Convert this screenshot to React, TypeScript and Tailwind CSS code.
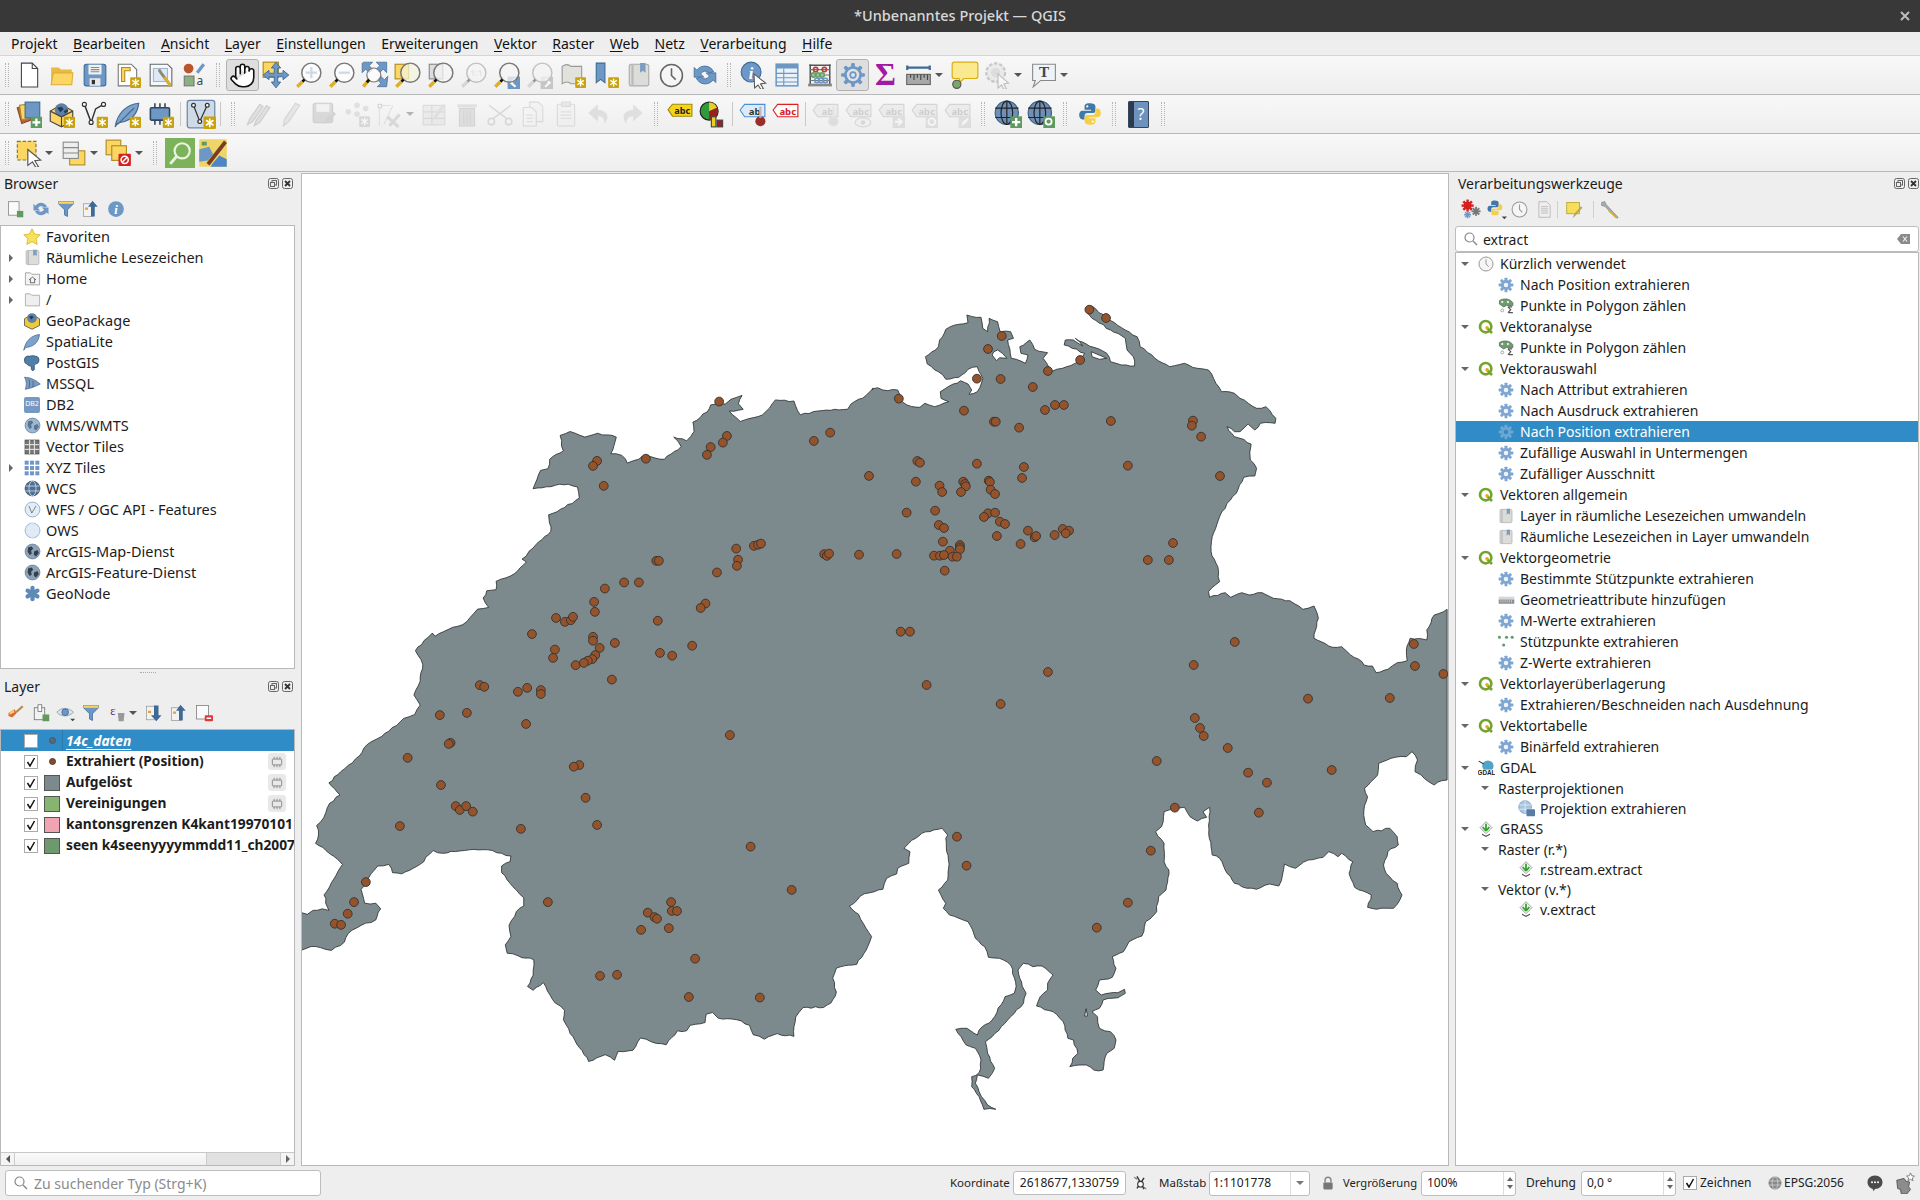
import React from "react";
import { Hand } from "lucide-react";

const BLUE = "#6d97c4";
const DBLUE = "#3f6a96";
const YEL = "#fcd662";
const GOLD = "#c9a20c";

type P = { s?: number; children?: React.ReactNode };
const Sv = ({ s = 24, children }: P) => (
  <svg width={s} height={s} viewBox="0 0 24 24" className="block shrink-0">
    {children}
  </svg>
);

// gold corner badge used on the "new ..." icons
const Badge = ({ c = GOLD }: { c?: string }) => (
  <g>
    <rect x="14" y="14" width="10" height="10" rx="1" fill={c} />
    <path d="M19 15.5v7M16 17l6 4M22 17l-6 4" stroke="#fff" strokeWidth="1.3" />
  </g>
);

const Gear = ({ s = 16, c = "#7ea6d1", hub = "#eef4fa" }: { s?: number; c?: string; hub?: string }) => (
  <Sv s={s}>
    {[0, 45, 90, 135].map((a) => (
      <rect key={a} x="9.8" y="1" width="4.4" height="22" rx="1" fill={c} transform={`rotate(${a} 12 12)`} />
    ))}
    <circle cx="12" cy="12" r="7.6" fill={c} />
    <circle cx="12" cy="12" r="3.4" fill={hub} />
  </Sv>
);

const Mag = ({ fill = "#f4f4f4", children, s = 27 }: { fill?: string; children?: React.ReactNode; s?: number }) => (
  <Sv s={s}>
    {children}
    <circle cx="14.5" cy="9.5" r="8.5" fill={fill} fillOpacity="0.75" stroke="#777" strokeWidth="1.3" />
    <path d="M8.5 15.5L6.500 17.500" stroke="#111" strokeWidth="2.4" />
    <path d="M6.500 17.500l-4.500 4.500" stroke="#e0b020" strokeWidth="3" />
  </Sv>
);

const Globe = ({ s = 18, c = "#7c9cc0", d = "#4e6e92" }: { s?: number; c?: string; d?: string }) => (
  <Sv s={s}>
    <circle cx="12" cy="12" r="10.5" fill={c} stroke={d} />
    <ellipse cx="12" cy="12" rx="5" ry="10.5" fill="none" stroke="#e6eef6" strokeWidth="1" />
    <path d="M2 8.5h20M2 15.5h20" stroke="#e6eef6" strokeWidth="1" />
  </Sv>
);

const Earth = ({ s = 18, dark = false }: { s?: number; dark?: boolean }) => (
  <Sv s={s}>
    <circle cx="12" cy="12" r="10.5" fill={dark ? "#8fa3b8" : "#9db7d2"} stroke="#5d7a98" />
    <path d="M6 6l5-1 2 3-3 3 1 4-3 2-3-5zM14 12l5-2 2 4-4 5-3-2z" fill={dark ? "#33404c" : "#5b7590"} />
  </Sv>
);

const QLogo = ({ s = 16 }: { s?: number }) => (
  <Sv s={s}>
    <circle cx="11.5" cy="11.5" r="8.5" fill="#fff" stroke="#74a32f" strokeWidth="4" />
    <path d="M13 13l8 8" stroke="#74a32f" strokeWidth="4" />
    <circle cx="13.5" cy="13" r="2.6" fill="#e8a91c" />
  </Sv>
);

const Grass = ({ s = 16 }: { s?: number }) => (
  <Sv s={s}>
    <path d="M12 1l9 9-9 9-9-9z" fill="#eef5e8" stroke="#778" strokeWidth="1" />
    <path d="M12 4v11M12 15l-5-6M12 15l5-6" stroke="#2fa32f" strokeWidth="2.6" />
    <path d="M6 20l6 3 6-3" fill="none" stroke="#555" strokeWidth="1.6" />
  </Sv>
);

const Bookmark = ({ s = 16 }: { s?: number }) => (
  <Sv s={s}>
    <rect x="3" y="2" width="18" height="20" rx="2" fill="#dcdcd8" stroke="#aaa" />
    <path d="M6 2v20" stroke="#bbb" strokeWidth="2" />
    <path d="M13 1h5v9l-2.5-2-2.5 2z" fill="#7c9cc0" />
  </Sv>
);

const Clock = ({ s = 18, c = "#888" }: { s?: number; c?: string }) => (
  <Sv s={s}>
    <circle cx="12" cy="12" r="10.5" fill="#f6f6f6" stroke={c} strokeWidth="1.5" />
    <path d="M12 5v7l4 4" fill="none" stroke={c} strokeWidth="1.5" />
  </Sv>
);

const PyLogo = ({ s = 24 }: { s?: number }) => (
  <Sv s={s}>
    <path d="M12 2c-5 0-5 2-5 3v3h6v1H5c-2 0-3 2-3 4s1 4 3 4h2v-3c0-2 1-3 3-3h5c1.5 0 2-1 2-2V5c0-2-2-3-5-3z" fill="#3f78aa" />
    <path d="M12 22c5 0 5-2 5-3v-3h-6v-1h8c2 0 3-2 3-4s-1-4-3-4h-2v3c0 2-1 3-3 3H9c-1.5 0-2 1-2 2v4c0 2 2 3 5 3z" fill="#f6cf4a" />
    <circle cx="9.5" cy="5" r="1" fill="#fff" />
    <circle cx="14.5" cy="19" r="1" fill="#fff" />
  </Sv>
);

const LabelTag = ({ bg = "#fff", st = "#999", tx = "#888", label = "abc" }) => (
  <>
    <path d="M1 8l4-5h18v11H5z" fill={bg} stroke={st} />
    <text x="14" y="12" textAnchor="middle" fontSize="8.5" fontWeight="700" fontFamily="Noto Sans" fill={tx}>
      {label}
    </text>
  </>
);

const Chip = ({ s = 16, c = "#888", f = "none" }: { s?: number; c?: string; f?: string }) => (
  <Sv s={s}>
    <rect x="4" y="7" width="16" height="10" rx="1" fill={f} stroke={c} strokeWidth="1.6" />
    <path d="M7 3v4M12 3v4M17 3v4M7 17v4M12 17v4M17 17v4" stroke={c} strokeWidth="1.6" />
  </Sv>
);

// toolbar icons
const I: Record<string, React.ReactNode> = {
  hand: <Hand size={27} fill="#fff" stroke="#111" strokeWidth={1.4} />,
  new: (
    <Sv s={26}>
      <path d="M5 1h10l5 5v17H5z" fill="#fff" stroke="#444" />
      <path d="M15 1v5h5" fill="none" stroke="#444" />
    </Sv>
  ),
  open: (
    <Sv s={26}>
      <path d="M2 21V5h7l2 2h10v14z" fill="#eab93f" />
      <path d="M2 21l2-11h18l-1 11z" fill={YEL} stroke="#dcae39" />
    </Sv>
  ),
  save: (
    <Sv s={26}>
      <rect x="2" y="2" width="20" height="20" rx="2" fill={BLUE} stroke={DBLUE} />
      <rect x="6" y="2.5" width="12" height="9" fill="#f2f2f2" />
      <path d="M8 5h8M8 7h8M8 9h8" stroke="#888" />
      <rect x="7" y="15" width="10" height="7" fill="#e8e8e8" />
      <rect x="9" y="16.5" width="3" height="4" fill="#333" />
    </Sv>
  ),
  layoutNew: (
    <Sv s={26}>
      <path d="M3 2h12l5 5v15H3z" fill="#fff" stroke="#777" />
      <path d="M6 5h8v3H9v10H6z" fill={YEL} stroke="#b08a20" />
      <Badge />
    </Sv>
  ),
  layoutMgr: (
    <Sv s={26}>
      <path d="M2 2h16l4 4v16H2z" fill="#f6f8fc" stroke="#666" />
      <rect x="5" y="6" width="13" height="12" fill="#dfe8f6" stroke="#9db7d2" />
      <path d="M10 7l2 3 9 12" stroke="#8a8a70" strokeWidth="2.6" />
      <path d="M15 14l6 8" stroke="#e0b020" strokeWidth="2.6" />
    </Sv>
  ),
  style: (
    <Sv s={26}>
      <circle cx="7" cy="6" r="4.5" fill="#b9562e" />
      <path d="M15 10l6-8" stroke={BLUE} strokeWidth="3" />
      <rect x="3" y="13" width="9" height="9" fill="#8cb080" stroke="#777" />
      <text x="17.5" y="21" textAnchor="middle" fontSize="11" fontFamily="Noto Sans" fill="#444">
        a
      </text>
    </Sv>
  ),
  pan: (
    <Sv s={28}>
      <rect x="1" y="1" width="13" height="13" fill={YEL} stroke="#b08a20" />
      <path d="M12 1l4 5h-2.5v4.500H18V8l5 4-5 4v-2.500h-4.500V18H16l-4 5-4-5h2.500v-4.500H6V16l-5-4 5-4v2.500h4.500V6H8z" fill={BLUE} stroke={DBLUE} strokeWidth=".8" />
    </Sv>
  ),
  zoomIn: (
    <Mag fill="#fff">
      <path d="M14.500 4.500v10M9.500 9.500h10" stroke={DBLUE} strokeWidth="2" />
    </Mag>
  ),
  zoomOut: (
    <Mag fill="#fff">
      <path d="M9.500 9.500h10" stroke={DBLUE} strokeWidth="2" />
    </Mag>
  ),
  zoomFull: (
    <Sv s={28}>
      <path d="M2 1h8L7 4l3 3-3 3-3-3-3 3V2zM22 1v9l-3-3-3 3-3-3 3-3-3-3zM22 22h-8l3-3-3-3 3-3 3 3 3-3z" fill={BLUE} stroke={DBLUE} strokeWidth=".6" />
      <circle cx="11" cy="12" r="6" fill="#fff" fillOpacity=".7" stroke="#777" />
      <path d="M7 16l-5 6" stroke="#e0b020" strokeWidth="3" />
      <path d="M7 16l-2 2.4" stroke="#111" strokeWidth="2.4" />
    </Sv>
  ),
  zoomSel: (
    <Mag fill="#f4f4dc">
      <rect x="1" y="2" width="12" height="13" fill={YEL} stroke="#b08a20" />
    </Mag>
  ),
  zoomLayer: (
    <Mag>
      <rect x="2" y="2" width="12" height="13" fill="#ddd" stroke="#888" />
    </Mag>
  ),
  zoom11: (
    <div className="opacity-40 grayscale">
      <Mag>
        <text x="14.500" y="12.500" textAnchor="middle" fontSize="8" fontWeight="700" fontFamily="Noto Sans" fill="#666">
          1:1
        </text>
      </Mag>
    </div>
  ),
  zoomLast: (
    <Mag>
      <rect x="13" y="13" width="11" height="11" fill={BLUE} />
      <path d="M20 15l-4 3.500 4 3.500" fill="none" stroke="#fff" strokeWidth="2" />
    </Mag>
  ),
  zoomNext: (
    <div className="opacity-40 grayscale">
      <Mag>
        <rect x="13" y="13" width="11" height="11" fill="#888" />
        <path d="M17 15l4 3.500-4 3.500" fill="none" stroke="#fff" strokeWidth="2" />
      </Mag>
    </div>
  ),
  mapView: (
    <Sv s={26}>
      <path d="M2 4c3-2 6-2 8 0h10v16H10c-2-2-5-2-8 0z" fill="#e2e2dc" stroke="#999" />
      <Badge />
    </Sv>
  ),
  bmNew: (
    <Sv s={26}>
      <path d="M3 1h8v18l-4-3-4 3z" fill={BLUE} stroke={DBLUE} />
      <Badge />
    </Sv>
  ),
  bm: <Bookmark s={26} />,
  clock: <Clock s={25} c="#666" />,
  refresh: (
    <Sv s={26}>
      <path d="M20 9A9 9 0 0 0 4.5 7.500L2 5v9h9l-3-3a5 5 0 0 1 8-1z" fill={BLUE} stroke={DBLUE} strokeWidth=".7" />
      <path d="M4 15a9 9 0 0 0 15.500 1.500L22 19v-9h-9l3 3a5 5 0 0 1-8 1z" fill={BLUE} stroke={DBLUE} strokeWidth=".7" />
    </Sv>
  ),
  identify: (
    <Sv s={28}>
      <circle cx="9.5" cy="9.5" r="8.5" fill={BLUE} stroke={DBLUE} />
      <text x="9.5" y="15" textAnchor="middle" fontSize="14" fontWeight="700" fontStyle="italic" fontFamily="Liberation Serif" fill="#fff">
        i
      </text>
      <path d="M12 11l10 8-4.500 .6 2.500 4-2 1-2.500-4-3 2.500z" fill="#fff" stroke="#555" strokeWidth=".9" />
    </Sv>
  ),
  table: (
    <Sv s={26}>
      <rect x="2" y="2" width="20" height="20" fill="#eaf1f9" stroke={BLUE} strokeWidth="1.4" />
      <rect x="2" y="2" width="20" height="4" fill={BLUE} />
      <path d="M2 10.5h20M2 14.5h20M2 18.5h20M9 6v16" stroke={BLUE} />
    </Sv>
  ),
  abacus: (
    <Sv s={26}>
      <path d="M3 2v19M21 2v19M2 3h20" stroke="#555" strokeWidth="1.4" />
      <rect x="1" y="20" width="22" height="2.5" fill="#888" />
      <path d="M3 7h18M3 12h18M3 17h18" stroke="#777" />
      {[8, 16].map((x) => (
        <circle key={x} cx={x} cy="7" r="2" fill="none" stroke="#c23a3a" strokeWidth="1.5" />
      ))}
      {[6, 10, 14].map((x) => (
        <circle key={x} cx={x} cy="12" r="2" fill="none" stroke="#5fa55f" strokeWidth="1.5" />
      ))}
      {[9, 13, 17].map((x) => (
        <circle key={x} cx={x} cy="17" r="2" fill="none" stroke={BLUE} strokeWidth="1.5" />
      ))}
    </Sv>
  ),
  gear: (
    <Sv s={26}>
      {[0, 45, 90, 135].map((a) => (
        <rect key={a} x="10.3" y="1" width="3.4" height="22" rx="1" fill={BLUE} transform={`rotate(${a} 12 12)`} />
      ))}
      <circle cx="12" cy="12" r="7" fill="#dfe3e8" stroke={BLUE} strokeWidth="2.5" />
      <circle cx="12" cy="12" r="2.6" fill="#dfe3e8" stroke={BLUE} strokeWidth="1.5" />
    </Sv>
  ),
  sigma: <span className="font-['Liberation_Serif',serif] text-[32px] leading-[28px] font-bold text-[#a319a3]">Σ</span>,
  ruler: (
    <Sv s={27}>
      <path d="M2 3v4M22 3v4M2 5h20" stroke={DBLUE} strokeWidth="2" />
      <rect x="1.5" y="11" width="21" height="9" fill="#a8a8a8" stroke="#666" />
      <path d="M5 11v3M8 11v5M11 11v3M14 11v5M17 11v3M20 11v5" stroke="#444" />
    </Sv>
  ),
  bubble: (
    <Sv s={28}>
      <path d="M3 1h18a2 2 0 0 1 2 2v10a2 2 0 0 1-2 2H11l-3 3-1-3H3a2 2 0 0 1-2-2V3a2 2 0 0 1 2-2z" fill="#fbe98f" stroke="#d8ae12" />
      <circle cx="5" cy="20" r="3.5" fill="#7ba56a" stroke="#555" />
    </Sv>
  ),
  action: (
    <div className="opacity-40 grayscale">
      <Sv s={28}>
        <circle cx="10" cy="10" r="8" fill="#ddd" stroke="#888" strokeWidth="2" strokeDasharray="3 1.5" />
        <circle cx="10" cy="10" r="4" fill="#bbb" />
        <path d="M12 11l9 8-4 .6 2 4-2 1-2-4-3 2.5z" fill="#fff" stroke="#777" />
      </Sv>
    </div>
  ),
  textAnn: (
    <Sv s={26}>
      <path d="M1.5 2h21v15H9L2 23l2-6H1.5z" fill="#edf3f6" stroke="#888" />
      <text x="12" y="14" textAnchor="middle" fontSize="14" fontWeight="700" fontFamily="Liberation Serif" fill="#444">
        T
      </text>
    </Sv>
  ),
  addLayer: (
    <Sv s={27}>
      <path d="M2 6l9-3 3 14-8 3z" fill="#c2643a" stroke="#8a4a2a" />
      <rect x="5" y="3" width="11" height="13" fill={YEL} stroke="#b08a20" transform="rotate(-8 10 10)" />
      <rect x="9" y="1" width="13" height="14" fill={BLUE} stroke={DBLUE} />
      <rect x="14" y="14" width="10" height="10" fill="#5f9a5f" />
      <path d="M19 15.5v7M15.5 19h7" stroke="#fff" strokeWidth="2" />
    </Sv>
  ),
  gpkg: (
    <Sv s={27}>
      <path d="M2 9l10-6 10 6v9l-10 5-10-5z" fill={YEL} stroke="#444" />
      <circle cx="12" cy="8" r="6" fill="#5f7fa5" />
      <path d="M8 6l4-1 2 2-3 3zM14 9l3-2 1 2-3 2z" fill="#1f3a5a" />
      <path d="M2 9l10 5 10-5M12 14v9" fill="none" stroke="#444" />
      <Badge />
    </Sv>
  ),
  shp: (
    <Sv s={27}>
      <path d="M3 3l6 16 4-12 7-4" fill="none" stroke="#333" strokeWidth="1.3" />
      <circle cx="3" cy="3" r="1.8" fill="#fff" stroke="#333" />
      <circle cx="9" cy="19" r="1.8" fill="#fff" stroke="#333" />
      <circle cx="20" cy="3" r="1.8" fill="#fff" stroke="#333" />
      <Badge />
    </Sv>
  ),
  feather: (
    <Sv s={27}>
      <path d="M1 23c2-12 10-20 21-21-1 9-6 14-12 16-3 1-6 1-7 2z" fill="#7ba3cc" stroke="#47688f" />
      <path d="M3 21L18 6" stroke="#47688f" />
      <Badge />
    </Sv>
  ),
  tmp: (
    <Sv s={27}>
      <rect x="3" y="6" width="17" height="11" rx="1" fill={BLUE} stroke="#33475c" strokeWidth="1.4" />
      <path d="M7 2v4M11.500 2v4M16 2v4M7 17v4M11.500 17v4" stroke="#33475c" strokeWidth="1.4" />
      <Badge />
    </Sv>
  ),
  vedit: (
    <Sv s={30}>
      <rect x="1" y="1" width="22" height="22" rx="2" fill="#cfdae7" stroke="#6d88a8" />
      <path d="M6 5l5 13 6-13" fill="none" stroke="#333" />
      <circle cx="6" cy="5" r="1.5" fill="#fff" stroke="#333" />
      <circle cx="17" cy="5" r="1.5" fill="#fff" stroke="#333" />
      <circle cx="11" cy="18" r="1.5" fill="#fff" stroke="#333" />
      <Badge />
    </Sv>
  ),
  pen2: (
    <Sv s={27}>
      <path d="M3 21l2-5 9-13 3 2-9 13zM9 22l2-5 9-13 3 2-9 13z" fill="#bbb" stroke="#888" />
    </Sv>
  ),
  pen: (
    <Sv s={26}>
      <path d="M5 23l1-6L16 2l4 2-10 15z" fill="#ccc" stroke="#999" />
    </Sv>
  ),
  saveEdit: (
    <Sv s={26}>
      <rect x="2" y="2" width="18" height="18" rx="2" fill="#aaa" stroke="#888" />
      <rect x="5" y="3" width="12" height="7" fill="#eee" />
      <path d="M12 21l2-5 7-6 2 2-6 7z" fill="#999" />
    </Sv>
  ),
  nodes: (
    <Sv s={26}>
      {[[4, 10], [12, 4], [20, 7], [12, 12]].map(([x, y]) => (
        <circle key={x * y} cx={x} cy={y} r="2.6" fill="#bbb" />
      ))}
      <Badge c="#aaa" />
    </Sv>
  ),
  tools: (
    <Sv s={27}>
      <rect x="2" y="3" width="3" height="3" fill="none" stroke="#999" />
      <path d="M5 4h8M3 6v16M15 4l-8 17" stroke="#bbb" />
      <path d="M10 14l10 9M21 12L12 22" stroke="#aaa" strokeWidth="2.8" />
    </Sv>
  ),
  attrEdit: (
    <Sv s={26}>
      <rect x="2" y="4" width="20" height="18" fill="#ddd" stroke="#aaa" />
      <path d="M2 10h20M2 16h20M10 4v18" stroke="#aaa" />
      <path d="M10 19l2-5 8-11 2 2-8 11z" fill="#bbb" />
    </Sv>
  ),
  trash: (
    <Sv s={26}>
      <rect x="3" y="3" width="18" height="3" fill="#c8b8b8" />
      <path d="M5 7h14v16H5z" fill="#c8b8b8" stroke="#a89898" />
      <path d="M9 9v12M12 9v12M15 9v12" stroke="#a89898" />
    </Sv>
  ),
  cut: (
    <Sv s={26}>
      <path d="M2 4l16 12M22 4L6 16" stroke="#aaa" strokeWidth="1.5" />
      <circle cx="4" cy="19" r="3" fill="none" stroke="#aaa" strokeWidth="1.5" />
      <circle cx="20" cy="19" r="3" fill="none" stroke="#aaa" strokeWidth="1.5" />
    </Sv>
  ),
  copy: (
    <Sv s={26}>
      <path d="M9 1h8l4 4v14H9z" fill="#eee" stroke="#aaa" />
      <path d="M3 6h8l4 4v13H3z" fill="#f4f4f4" stroke="#aaa" />
      <path d="M6 13h6M6 16h6M6 19h6" stroke="#bbb" />
    </Sv>
  ),
  paste: (
    <Sv s={26}>
      <rect x="4" y="3" width="16" height="20" rx="1" fill="#eee" stroke="#aaa" />
      <rect x="8" y="1" width="8" height="4" fill="#ccc" stroke="#aaa" />
      <path d="M7 10h10M7 13h10M7 16h10" stroke="#bbb" />
    </Sv>
  ),
  undo: (
    <Sv s={26}>
      <path d="M11 3L2 11l9 8v-5c4 0 6 2 6 7 4-4 5-12-6-13z" fill="#bbb" />
    </Sv>
  ),
  redo: (
    <Sv s={26}>
      <path d="M13 3l9 8-9 8v-5c-4 0-6 2-6 7-4-4-5-12 6-13z" fill="#bbb" />
    </Sv>
  ),
  lblYellow: (
    <Sv s={26}>
      <LabelTag bg="#f6d419" st="#9c8a10" tx="#222" />
    </Sv>
  ),
  lblChart: (
    <Sv s={27}>
      <circle cx="9" cy="9" r="8" fill="#2e9a3a" stroke="#222" />
      <path d="M9 9V1a8 8 0 0 1 7 5z" fill="#e8d020" />
      <path d="M9 9l7-3a8 8 0 0 1-7 11z" fill="#9a1f1f" />
      <rect x="11" y="14" width="4" height="9" fill="#e8d020" stroke="#444" />
      <rect x="16" y="17" width="5" height="6" fill="#9a1f1f" stroke="#444" />
    </Sv>
  ),
  lblPin: (
    <Sv s={27}>
      <LabelTag bg="#dceafa" st="#4a90d9" tx="#333" label="ab" />
      <circle cx="19" cy="18" r="4.5" fill="#9a2c2c" />
      <path d="M19 5v10" stroke="#bbb" strokeWidth="2" />
    </Sv>
  ),
  lblRed: (
    <Sv s={27}>
      <LabelTag st="#e02020" tx="#d02020" />
    </Sv>
  ),
  lg1: (
    <Sv s={27}>
      <LabelTag bg="#ddd" label="ab" />
      <circle cx="19" cy="18" r="4.5" fill="#bbb" />
      <path d="M19 5v10" stroke="#ccc" strokeWidth="2" />
    </Sv>
  ),
  lg2: (
    <Sv s={27}>
      <LabelTag bg="#ddd" />
      <ellipse cx="16" cy="19" rx="7" ry="4" fill="#eee" stroke="#aaa" />
      <circle cx="16" cy="19" r="2" fill="#aaa" />
    </Sv>
  ),
  lg3: (
    <Sv s={27}>
      <LabelTag bg="#ddd" />
      <rect x="13" y="13" width="11" height="11" fill="#bbb" />
      <path d="M15 18.500h5M18 15.500l3 3-3 3" fill="none" stroke="#fff" strokeWidth="1.8" />
    </Sv>
  ),
  lg4: (
    <Sv s={27}>
      <LabelTag bg="#ddd" />
      <rect x="13" y="13" width="11" height="11" fill="#bbb" />
      <circle cx="18.5" cy="18.5" r="3" fill="none" stroke="#fff" strokeWidth="1.6" />
    </Sv>
  ),
  lg5: (
    <Sv s={27}>
      <LabelTag bg="#ddd" />
      <rect x="13" y="13" width="11" height="11" fill="#bbb" />
      <path d="M15 22l2-4 4-3 1 1-3 4z" fill="#fff" />
    </Sv>
  ),
  wms: (
    <Sv s={28}>
      <circle cx="11" cy="11" r="10" fill="#6d8fb8" stroke="#40607e" />
      <ellipse cx="11" cy="11" rx="5" ry="10" fill="none" stroke="#222" />
      <path d="M1 7h20M1 15h20M11 1v20" stroke="#222" />
      <rect x="14" y="14" width="10" height="10" fill="#5f9a5f" />
      <path d="M19 15.5v7M15.5 19h7" stroke="#fff" strokeWidth="2" />
    </Sv>
  ),
  wms2: (
    <Sv s={28}>
      <circle cx="11" cy="11" r="10" fill="#6d8fb8" stroke="#40607e" />
      <ellipse cx="11" cy="11" rx="5" ry="10" fill="none" stroke="#222" />
      <path d="M1 7h20M1 15h20M11 1v20" stroke="#222" />
      <rect x="14" y="14" width="10" height="10" fill="#5f9a5f" />
      <circle cx="18.5" cy="18.5" r="2.6" fill="none" stroke="#fff" strokeWidth="1.5" />
    </Sv>
  ),
  py: <PyLogo s={26} />,
  help: (
    <div className="flex h-[27px] w-[21px] overflow-hidden rounded-[1px] border border-[#33475c]">
      <div className="w-[5px] bg-[#2f3b4a]" />
      <div className="flex-1 bg-[#6d92bd] text-center text-[16px] leading-[24px] text-white">?</div>
    </div>
  ),
  select: (
    <Sv s={28}>
      <rect x="2" y="2" width="16" height="16" fill={YEL} stroke="#8a7a20" strokeDasharray="3 1.5" />
      <path d="M11 9l11 9-5 .6 3 5-2 1-3-5-4 3z" fill="#fff" stroke="#555" />
    </Sv>
  ),
  selAttr: (
    <Sv s={26}>
      <rect x="8" y="10" width="14" height="13" fill={YEL} stroke="#b08a20" />
      <rect x="2" y="2" width="14" height="15" fill="#eee" stroke="#888" />
      <path d="M2 7h14M2 12h14" stroke="#888" />
    </Sv>
  ),
  deselect: (
    <Sv s={27}>
      <rect x="1" y="1" width="13" height="13" fill={YEL} stroke="#b08a20" />
      <rect x="6" y="6" width="13" height="13" fill={YEL} stroke="#b08a20" />
      <rect x="12" y="13" width="11" height="11" rx="1" fill="#d81f1f" />
      <circle cx="17.5" cy="18.5" r="3.2" fill="none" stroke="#fff" strokeWidth="1.4" />
      <path d="M15.5 20.5l4-4" stroke="#fff" strokeWidth="1.4" />
    </Sv>
  ),
  locate: (
    <div className="flex h-[30px] w-[30px] items-center justify-center bg-[#7cb35a]">
      <Sv s={26}>
        <circle cx="14" cy="10" r="7" fill="none" stroke="#e9f4df" strokeWidth="2" />
        <path d="M9 15l-6 7" stroke="#e9f4df" strokeWidth="2.6" />
      </Sv>
    </div>
  ),
  mapPaint: (
    <Sv s={30}>
      <rect x="1" y="1" width="22" height="22" fill="#efd46a" />
      <path d="M1 9l8-2 3 6-4 5-7 1z" fill="#6d97c4" />
      <path d="M12 20l5-6 6 3v6H10z" fill="#4d86c8" />
      <path d="M3 3h4v3H3z" fill="#5f9a5f" />
      <path d="M8 21L22 3" stroke="#7c3d1e" strokeWidth="3" />
    </Sv>
  ),
};

const Grip = ({ w }: { w: number }) => (
  <div className="flex shrink-0 justify-center" style={{ width: w }}>
    <div className="h-[24px] w-[4px] border-x border-dotted border-[#b4b4b4]" />
  </div>
);
const Sep = () => (
  <div className="flex w-[7px] shrink-0 justify-center">
    <div className="h-[24px] w-px bg-[#c8c8c8]" />
  </div>
);
const Caret = ({ c = "border-t-[#555]" }: { c?: string }) => (
  <div className={`h-0 w-0 border-x-[4px] border-t-[4px] border-x-transparent ${c}`} />
);

const Btn = ({ i, off, on, w = 33, caret }: { i: string; off?: boolean; on?: boolean; w?: number; caret?: boolean }) => (
  <div className="flex h-[33px] shrink-0 items-center" style={{ width: w }}>
    <div
      className={`flex h-[32px] w-[33px] shrink-0 items-center justify-center rounded-[3px] ${
        on ? "border border-[#b2b2b2] bg-[#dedede]" : ""
      }`}
    >
      <div className={off ? "opacity-35 grayscale" : ""}>{I[i]}</div>
    </div>
    {caret && (
      <div className={off ? "opacity-40" : ""}>
        <Caret />
      </div>
    )}
  </div>
);

const Toolbar = ({ children, last }: { children: React.ReactNode; last?: boolean }) => (
  <div
    className={`flex shrink-0 items-center border-b border-[#b9b9b9] bg-gradient-to-b from-[#f8f8f8] to-[#eeeeee] pl-px ${
      last ? "h-[38px]" : "h-[39px]"
    }`}
  >
    {children}
  </div>
);

const MENU: [string, string, string][] = [
  ["Pro", "j", "ekt"],
  ["", "B", "earbeiten"],
  ["", "A", "nsicht"],
  ["", "L", "ayer"],
  ["", "E", "instellungen"],
  ["Er", "w", "eiterungen"],
  ["", "V", "ektor"],
  ["", "R", "aster"],
  ["", "W", "eb"],
  ["", "N", "etz"],
  ["", "V", "erarbeitung"],
  ["", "H", "ilfe"],
];

const DockBtns = () => (
  <div className="flex gap-[3px]">
    <svg width="11" height="11" viewBox="0 0 11 11" className="block">
      <rect x=".5" y=".5" width="10" height="10" rx="2" fill="none" stroke="#666" />
      <rect x="4" y="2.5" width="4.5" height="4.5" fill="none" stroke="#666" />
      <rect x="2.5" y="4.5" width="4" height="4" fill="#eee" stroke="#666" />
    </svg>
    <svg width="11" height="11" viewBox="0 0 11 11" className="block">
      <rect x=".5" y=".5" width="10" height="10" rx="2" fill="none" stroke="#666" />
      <path d="M3 3l5 5M8 3l-5 5" stroke="#333" strokeWidth="1.8" />
    </svg>
  </div>
);

const DockTitle = ({ t }: { t: string }) => (
  <div className="flex h-[26px] shrink-0 items-center justify-between pr-[2px] pb-[3px] text-[14px] text-[#1c1c1c]">
    <span className="pl-[4px]">{t}</span>
    <DockBtns />
  </div>
);

const Tri = () => (
  <div className="h-0 w-0 border-y-[4px] border-l-[4px] border-y-transparent border-l-[#666]" />
);

const BROWSER: [string, React.ReactNode, boolean?][] = [
  [
    "Favoriten",
    <Sv s={18}>
      <path d="M12 1l3.400 7 7.600 1-5.500 5.300L19 22l-7-3.700L5 22l1.500-7.700L1 9l7.600-1z" fill="#f7e05a" stroke="#d2b21e" />
    </Sv>,
  ],
  ["Räumliche Lesezeichen", <Bookmark s={17} />, true],
  [
    "Home",
    <Sv s={17}>
      <path d="M2 4h7l2 2h11v15H2z" fill="#f4f4f4" stroke="#888" />
      <path d="M7 14l5-4 5 4M9 13v5h6v-5" fill="none" stroke="#333" />
    </Sv>,
    true,
  ],
  [
    "/",
    <Sv s={17}>
      <path d="M2 4h7l2 2h11v15H2z" fill="#efefef" stroke="#999" />
    </Sv>,
    true,
  ],
  [
    "GeoPackage",
    <Sv s={18}>
      <path d="M2 9l10-6 10 6v9l-10 5-10-5z" fill="#f0c93a" stroke="#444" />
      <circle cx="12" cy="8" r="6.5" fill="#5f7fa5" />
      <path d="M8 6l4-1 2 2-3 3z" fill="#1f3a5a" />
    </Sv>,
  ],
  [
    "SpatiaLite",
    <Sv s={18}>
      <path d="M1 23c2-12 10-20 21-21-1 9-6 14-12 16-3 1-6 1-7 2z" fill="#7ba3cc" stroke="#47688f" />
    </Sv>,
  ],
  [
    "PostGIS",
    <Sv s={18}>
      <path d="M2 8c0-4 3-6 7-5 2-1 6-1 8 0 3 0 5 3 4 7-1 3-3 3-4 3l-2 2v6c-2 2-4 1-4-2v-3c-3 0-5-1-6-3-2 0-3-2-3-5z" fill="#4d7fa8" stroke="#24425c" />
    </Sv>,
  ],
  [
    "MSSQL",
    <Sv s={18}>
      <path d="M2 3c8 0 15 4 21 9-6 3-13 6-20 7 2-5 2-11-1-16z" fill="#7b9cc0" stroke="#46688f" />
      <path d="M8 6c1 4 1 8 0 11M13 8c1 3 1 5 0 8" stroke="#3a5a80" fill="none" />
    </Sv>,
  ],
  [
    "DB2",
    <div className="flex h-[16px] w-[16px] items-center justify-center rounded-[2px] bg-[#7699c2] text-[7px] text-white">DB2</div>,
  ],
  ["WMS/WMTS", <Earth s={17} />],
  [
    "Vector Tiles",
    <Sv s={16}>
      <rect x="1.5" y="1.5" width="21" height="21" fill="#777" stroke="#444" />
      <path d="M8.5 1.5v21M15.5 1.5v21M1.5 8.5h21M1.5 15.5h21" stroke="#eee" strokeWidth="1.5" />
    </Sv>,
  ],
  [
    "XYZ Tiles",
    <Sv s={16}>
      {[1, 9, 17].flatMap((x) =>
        [1, 9, 17].map((y) => <rect key={`${x}-${y}`} x={x} y={y} width="6" height="6" fill="#6d97c4" />)
      )}
    </Sv>,
    true,
  ],
  ["WCS", <Globe s={17} c="#4f6f93" d="#33475c" />],
  [
    "WFS / OGC API - Features",
    <Sv s={17}>
      <circle cx="12" cy="12" r="10.5" fill="#e3edf7" stroke="#6d97c4" />
      <path d="M7 7l4 10 6-10" fill="none" stroke="#555" />
    </Sv>,
  ],
  ["OWS", <Globe s={17} c="#dfe9f5" d="#7c9cc0" />],
  ["ArcGIS-Map-Dienst", <Earth s={17} dark />],
  ["ArcGIS-Feature-Dienst", <Earth s={17} dark />],
  [
    "GeoNode",
    <Sv s={17}>
      {[0, 60, 120].map((a) => (
        <rect key={a} x="9" y="1" width="6" height="22" rx="3" fill="#5e8ab5" transform={`rotate(${a} 12 12)`} />
      ))}
    </Sv>,
  ],
];

const browserBtns = [
  <Sv s={17}>
    <rect x="2" y="1" width="15" height="19" fill="#fafafa" stroke="#777" />
    <rect x="14" y="14" width="9" height="9" fill="#5f9a5f" />
  </Sv>,
  <Sv s={18}>
    <path d="M20 9A9 9 0 0 0 4.5 7.5L2 5v9h9l-3-3a5 5 0 0 1 8-1z" fill={BLUE} />
    <path d="M4 15a9 9 0 0 0 15.5 1.5L22 19v-9h-9l3 3a5 5 0 0 1-8 1z" fill={BLUE} />
  </Sv>,
  <Sv s={18}>
    <path d="M2 2h20v3l-8 8v9l-4-2v-7L2 5z" fill={BLUE} stroke={DBLUE} />
    <rect x="2" y="2" width="20" height="3" fill={YEL} />
  </Sv>,
  <Sv s={18}>
    <rect x="2" y="5" width="12" height="17" fill="#f2f2f2" stroke="#999" />
    <path d="M14 1l7 8h-4v13h-5V9H8z" fill={DBLUE} />
    <rect x="4" y="10" width="4" height="3" fill="#e8a030" />
  </Sv>,
  <Sv s={18}>
    <circle cx="12" cy="12" r="10.5" fill={BLUE} />
    <text x="12" y="18" textAnchor="middle" fontSize="17" fontWeight="700" fontStyle="italic" fontFamily="Liberation Serif" fill="#fff">
      i
    </text>
  </Sv>,
];

const layerBtns: [React.ReactNode, number][] = [
  [
    <Sv s={18}>
      <path d="M2 12l8-5 3 5-6 6-5-2z" fill="#d86a3a" />
      <path d="M3 12l6-4 1 3-6 3z" fill={YEL} />
      <path d="M12 11L21 3" stroke="#b98a4a" strokeWidth="3" />
    </Sv>,
    25,
  ],
  [
    <Sv s={18}>
      <rect x="3" y="5" width="14" height="16" fill="#f2f2f2" stroke="#666" />
      <rect x="8" y="1" width="5" height="9" fill="#fff" stroke="#666" />
      <rect x="14" y="14" width="9" height="9" fill="#5f9a5f" />
    </Sv>,
    25,
  ],
  [
    <Sv s={20}>
      <path d="M1 11c5-6 14-6 20 0-6 6-15 6-20 0z" fill="#dde3ea" stroke="#8a9aaa" />
      <circle cx="11" cy="11" r="4" fill={BLUE} stroke={DBLUE} />
      <path d="M17 19h6l-3 3z" fill="#444" />
    </Sv>,
    25,
  ],
  [
    <Sv s={18}>
      <path d="M2 2h20v3l-8 8v9l-4-2v-7L2 5z" fill={BLUE} stroke={DBLUE} />
      <rect x="2" y="2" width="20" height="3" fill={YEL} />
    </Sv>,
    25,
  ],
  [
    <div className="flex items-center gap-[2px]">
      <Sv s={20}>
        <text x="7" y="14" textAnchor="middle" fontSize="15" fontFamily="Liberation Serif" fill="#5e2d7c">
          ε
        </text>
        <path d="M13 12h8l-1 10h-6z" fill="#999" />
      </Sv>
      <Caret />
    </div>,
    38,
  ],
  [
    <Sv s={18}>
      <rect x="2" y="3" width="12" height="18" fill="#f2f2f2" stroke="#999" />
      <path d="M15 23l7-8h-4V2h-6v13H8z" fill={DBLUE} />
      <rect x="4" y="9" width="4" height="3" fill="#e8a030" />
    </Sv>,
    25,
  ],
  [
    <Sv s={18}>
      <rect x="2" y="5" width="12" height="17" fill="#f2f2f2" stroke="#999" />
      <path d="M14 1l7 8h-4v13h-5V9H8z" fill={DBLUE} />
      <rect x="4" y="10" width="4" height="3" fill="#e8a030" />
    </Sv>,
    25,
  ],
  [
    <Sv s={18}>
      <rect x="2" y="2" width="16" height="18" fill="#fafafa" stroke="#777" />
      <rect x="13" y="15" width="11" height="8" rx="1" fill="#e03a3a" />
      <path d="M15.5 19h6" stroke="#fff" strokeWidth="2" />
    </Sv>,
    25,
  ],
];

type Lyr = [string, React.ReactNode, boolean];
const Swatch = ({ c }: { c: string }) => <div className="h-[16px] w-[16px] border border-[#555]" style={{ backgroundColor: c }} />;
const LAYERS: Lyr[] = [
  ["Extrahiert (Position)", <div className="h-[7px] w-[7px] rounded-full border border-[#5b3a2a] bg-[#8a4a2a]" />, true],
  ["Aufgelöst", <Swatch c="#7c8a8d" />, true],
  ["Vereinigungen", <Swatch c="#87b56f" />, true],
  ["kantonsgrenzen K4kant19970101", <Swatch c="#f0a3b2" />, false],
  ["seen k4seenyyyymmdd11_ch2007", <Swatch c="#6d9a6d" />, false],
];

const Check = () => (
  <div className="flex h-[14px] w-[14px] items-center justify-center border border-[#aaa] bg-white">
    <svg width="10" height="10" viewBox="0 0 10 10">
      <path d="M1.5 5l2.5 4 4.5-8" fill="none" stroke="#111" strokeWidth="1.5" />
    </svg>
  </div>
);

const bm17 = <Bookmark s={16} />;
const gear = <Gear />;
const qg = <QLogo />;
const counter = (
  <Sv s={17}>
    <path d="M2 5c4-3 12-3 16 0l3 3v4H12l-4 2-6-4z" fill="#6f9a72" stroke="#4c6d4e" />
    <circle cx="6" cy="7" r="1.5" fill="#fff" />
    <circle cx="14" cy="7" r="1.5" fill="#fff" />
    <circle cx="6" cy="19" r="2" fill="none" stroke="#888" />
    <path d="M14 14h6M15 22h6M14 14l4 4-4 4" fill="none" stroke="#555" strokeWidth="1.6" />
  </Sv>
);

type Row = { t: string; l: number; ic?: React.ReactNode; h?: number; sel?: boolean };
const TOOLS: Row[] = [
  { t: "Kürzlich verwendet", l: 0, ic: <Clock s={16} c="#999" /> },
  { t: "Nach Position extrahieren", l: 1, ic: gear },
  { t: "Punkte in Polygon zählen", l: 1, ic: counter },
  { t: "Vektoranalyse", l: 0, ic: qg },
  { t: "Punkte in Polygon zählen", l: 1, ic: counter },
  { t: "Vektorauswahl", l: 0, ic: qg },
  { t: "Nach Attribut extrahieren", l: 1, ic: gear },
  { t: "Nach Ausdruck extrahieren", l: 1, ic: gear },
  { t: "Nach Position extrahieren", l: 1, ic: <Gear c="#6ea6d2" hub="#308cc6" />, sel: true },
  { t: "Zufällige Auswahl in Untermengen", l: 1, ic: gear },
  { t: "Zufälliger Ausschnitt", l: 1, ic: gear },
  { t: "Vektoren allgemein", l: 0, ic: qg },
  { t: "Layer in räumliche Lesezeichen umwandeln", l: 1, ic: bm17 },
  { t: "Räumliche Lesezeichen in Layer umwandeln", l: 1, ic: bm17 },
  { t: "Vektorgeometrie", l: 0, ic: qg },
  { t: "Bestimmte Stützpunkte extrahieren", l: 1, ic: gear },
  {
    t: "Geometrieattribute hinzufügen",
    l: 1,
    ic: (
      <Sv s={17}>
        <path d="M1 8h22v4H1z" fill="#d6d6d6" />
        <rect x="1" y="12" width="22" height="6" fill="#8a8f94" />
        <path d="M4 13v3M7 13v3M10 13v3M13 13v3M16 13v3M19 13v3" stroke="#e6e6e6" />
      </Sv>
    ),
  },
  { t: "M-Werte extrahieren", l: 1, ic: gear },
  {
    t: "Stützpunkte extrahieren",
    l: 1,
    ic: (
      <Sv s={17}>
        {[[2, 6], [12, 6], [20, 6], [8, 17]].map(([x, y]) => (
          <circle key={x} cx={x} cy={y} r="2.2" fill="#5f9a6a" />
        ))}
      </Sv>
    ),
  },
  { t: "Z-Werte extrahieren", l: 1, ic: gear },
  { t: "Vektorlayerüberlagerung", l: 0, ic: qg },
  { t: "Extrahieren/Beschneiden nach Ausdehnung", l: 1, ic: gear },
  { t: "Vektortabelle", l: 0, ic: qg },
  { t: "Binärfeld extrahieren", l: 1, ic: gear },
  {
    t: "GDAL",
    l: 0,
    ic: (
      <Sv s={17}>
        <circle cx="14" cy="10" r="8" fill="#4ea3c8" />
        <path d="M1 3l7 4" stroke="#333" strokeWidth="1.5" />
        <rect x="0" y="15" width="24" height="9" fill="#fff" />
        <text x="12" y="23" textAnchor="middle" fontSize="9" fontWeight="700" fontFamily="Liberation Sans" fill="#222">
          GDAL
        </text>
      </Sv>
    ),
  },
  { t: "Rasterprojektionen", l: 2, h: 20 },
  {
    t: "Projektion extrahieren",
    l: 3,
    h: 20,
    ic: (
      <Sv s={17}>
        <circle cx="10" cy="10" r="9" fill="#a9c4df" stroke="#6d97c4" />
        <path d="M1 7h18M1 13h18M10 1v18" stroke="#eef4fa" />
        <rect x="12" y="13" width="12" height="10" rx="1" fill="#5a7ca3" />
      </Sv>
    ),
  },
  { t: "GRASS", l: 0, ic: <Grass /> },
  { t: "Raster (r.*)", l: 2, h: 20 },
  { t: "r.stream.extract", l: 3, h: 20, ic: <Grass /> },
  { t: "Vektor (v.*)", l: 2, h: 20 },
  { t: "v.extract", l: 3, h: 20, ic: <Grass /> },
];

const DownTri = () => <Caret c="border-t-[#666]" />;

const ToolRow = ({ r }: { r: Row }) => {
  const base = `flex shrink-0 items-center whitespace-nowrap ${r.sel ? "bg-[#308cc6] text-white" : ""}`;
  const h = r.h ?? 21;
  if (r.l === 0)
    return (
      <div className={base} style={{ height: h }}>
        <div className="flex w-[18px] justify-center">
          <DownTri />
        </div>
        <div className="ml-[3px] flex w-[18px] justify-center">{r.ic}</div>
        <span className="ml-[5px]">{r.t}</span>
      </div>
    );
  if (r.l === 2)
    return (
      <div className={`${base} pl-[20px]`} style={{ height: h }}>
        <div className="flex w-[18px] justify-center">
          <DownTri />
        </div>
        <span className="ml-[4px]">{r.t}</span>
      </div>
    );
  return (
    <div className={`${base} ${r.l === 1 ? "pl-[41px]" : "pl-[61px]"}`} style={{ height: h }}>
      <div className="flex w-[18px] justify-center">{r.ic}</div>
      <span className="ml-[5px]">{r.t}</span>
    </div>
  );
};

const procBtns: React.ReactNode[] = [
  <div className="w-[25px]">
    <Sv s={22}>
      <g transform="scale(.6)">
        {[0, 45, 90, 135].map((a) => (
          <rect key={a} x="9.8" y="1" width="4.4" height="22" fill="#d81f1f" transform={`rotate(${a} 12 12)`} />
        ))}
        <circle cx="12" cy="12" r="7" fill="#d81f1f" />
      </g>
      <g transform="translate(11 8) scale(.45)">
        {[0, 45, 90, 135].map((a) => (
          <rect key={a} x="9.8" y="1" width="4.4" height="22" fill="#777" transform={`rotate(${a} 12 12)`} />
        ))}
      </g>
      <g transform="translate(3 13) scale(.35)">
        {[0, 45, 90, 135].map((a) => (
          <rect key={a} x="9.8" y="1" width="4.4" height="22" fill={BLUE} transform={`rotate(${a} 12 12)`} />
        ))}
      </g>
    </Sv>
  </div>,
  <div className="w-[25px]">
    <Sv s={21}>
      <g transform="scale(.85)">
        <path d="M12 2c-5 0-5 2-5 3v3h6v1H5c-2 0-3 2-3 4s1 4 3 4h2v-3c0-2 1-3 3-3h5c1.5 0 2-1 2-2V5c0-2-2-3-5-3z" fill="#3f78aa" />
        <path d="M12 22c5 0 5-2 5-3v-3h-6v-1h8c2 0 3-2 3-4s-1-4-3-4h-2v3c0 2-1 3-3 3H9c-1.5 0-2 1-2 2v4c0 2 2 3 5 3z" fill="#f6cf4a" />
      </g>
      <path d="M18 20h6l-3 3z" fill="#444" />
    </Sv>
  </div>,
  <div className="w-[25px]">
    <Clock s={17} c="#999" />
  </div>,
  <div className="w-[18px]">
    <Sv s={17}>
      <path d="M4 1h11l5 5v17H4z" fill="#eee" stroke="#aaa" />
      <path d="M7 8h10M7 11h10M7 14h10M7 17h10" stroke="#aaa" />
    </Sv>
  </div>,
  <div className="mx-[3px] h-[17px] w-px bg-[#cfcfcf]" />,
  <div className="ml-[5px] w-[25px]">
    <Sv s={18}>
      <rect x="1" y="2" width="17" height="15" fill="#f7de5a" stroke="#b59a1e" />
      <path d="M9 23l2-6 9-10 2 2-9 10z" fill="#bda55a" />
    </Sv>
  </div>,
  <div className="mx-[2px] h-[17px] w-px bg-[#cfcfcf]" />,
  <div className="ml-[4px]">
    <Sv s={19}>
      <path d="M2 3l4-1 2 4 15 16-2 1L6 8 2 7z" fill="#aaa" stroke="#777" strokeWidth=".7" />
      <path d="M12 13l10 9-2 1-10-9z" fill="#e0b020" />
    </Sv>
  </div>,
];

// Swiss outline traced from the reference, in crop pixels of three separate zooms.
function chunk(a: number[]) {
  const out: number[][] = [];
  for (let i = 0; i < a.length; i += 2) out.push([a[i], a[i + 1]]);
  return out;
}
const ptA = (a: number[]) => chunk(a).map(([x, y]) => [300 + x / 2.703, 290 + y / 1.802]);
const ptB = (a: number[]) => chunk(a).map(([x, y]) => [870 + x / 2.703, 290 + y / 3]);
const ptC = (a: number[]) => chunk(a).map(([x, y]) => [870 + x / 2.703, 700 + y / 3]);
const toD = (p: number[][]) => "M" + p.map(([x, y]) => `${x.toFixed(1)} ${y.toFixed(1)}`).join("L") + "Z";

// border wiggle so long straight traced segments look like a real boundary
function rough(p: number[][]) {
  const out: number[][] = [];
  let seed = 1;
  for (let i = 0; i < p.length - 1; i++) {
    const [x0, y0] = p[i];
    const [x1, y1] = p[i + 1];
    const len = Math.hypot(x1 - x0, y1 - y0);
    const n = Math.max(1, Math.floor(len / 4));
    out.push([x0, y0]);
    for (let k = 1; k < n; k++) {
      seed = (seed * 7919 + 13) % 1009;
      const off = (seed / 1009 - 0.5) * 1.8;
      const t = k / n;
      out.push([x0 + (x1 - x0) * t - ((y1 - y0) / len) * off, y0 + (y1 - y0) * t + ((x1 - x0) / len) * off]);
    }
  }
  out.push(p[p.length - 1]);
  return out;
}

const NW = [3,1122,20,1125,35,1118,60,1115,78,1118,65,1090,85,1068,115,1035,100,1025,70,1010,42,997,50,982,45,965,65,950,80,925,108,910,78,888,110,868,150,845,190,815,240,795,280,772,310,765,325,748,308,730,325,705,332,675,312,650,335,632,358,618,365,624,400,612,440,603,460,590,480,575,510,572,495,555,505,542,530,540,530,525,570,515,612,490,600,485,630,465,678,435,672,405,715,392,755,375,750,355,725,350,690,352,630,358,640,342,650,325,670,322,675,305,712,290,703,262,730,255,770,265,805,258,855,265,840,295,870,298,885,312,935,298,985,305,1030,282,1010,265,1045,272,1065,255,1062,238,1100,220,1110,207,1150,205,1165,197,1195,190,1185,205,1198,215,1160,218,1190,237,1250,225,1285,198,1335,200,1352,225,1400,218,1480,215,1490,205,1530,190,1550,177];
const NE = [5,298,20,293,35,300,75,300,80,325,100,345,135,352,148,340,175,350,213,335,192,325,190,305,225,282,245,272,265,282,275,300,268,313,290,305,305,265,290,230,265,238,240,262,205,268,185,245,155,222,150,200,185,170,188,150,205,118,240,103,265,98,262,75,300,82,305,115,318,125,322,85,345,95,352,125,380,125,388,145,372,150,382,205,420,220,427,195,408,190,405,170,432,150,445,178,480,188,468,205,490,245,520,235,565,215,580,190,525,165,528,150,550,150,575,168,555,145,605,172,640,190,650,215,680,225,715,228,712,200,695,180,690,145,650,120,600,85,582,58,600,48,640,85,690,120,722,140,730,170,770,205,810,230,850,220,885,235,915,240,935,280,950,305,985,310,1000,325,1045,355,1070,350,1097,385,1095,400,1055,400,1040,420,1022,402,1000,425,985,425,965,410,985,440,1000,445,1030,462,1028,510,1045,535,1040,558,1010,562,990,610,965,640,945,680,925,740,922,785,940,830,945,875,915,905,918,922,960,908,975,922,1005,908,1025,915,1060,908,1090,925,1135,932,1170,958,1200,948,1212,985,1200,1045,1250,1072,1275,1070,1290,1085,1330,1115,1335,1125,1358,1128,1368,1148,1400,1138,1425,1118,1452,1112,1450,1080,1460,1045,1505,1050,1505,1020,1525,975,1560,958];
const SE = [1560,240,1545,242,1525,255,1510,245,1490,225,1473,215,1480,180,1465,155,1450,170,1420,172,1375,190,1372,225,1337,265,1345,290,1335,330,1340,375,1360,395,1405,385,1425,410,1428,435,1400,455,1388,495,1395,520,1425,550,1438,585,1415,625,1370,628,1345,622,1355,585,1310,562,1295,520,1305,485,1275,460,1265,470,1240,455,1225,472,1185,480,1150,505,1120,492,1115,525,1105,558,1080,552,1045,568,1005,560,985,550,960,510,945,475,925,465,917,415,918,322,900,335,910,352,885,363,865,350,850,322,825,328,795,335,788,380,772,395,795,430,795,485,808,510,800,570,780,590,775,635,745,665,735,708,700,725,685,755,655,770,665,805,655,832,620,840,610,870,625,885,670,878,688,868,690,880,670,893,630,900,620,925,600,935,615,950,620,985,650,995,665,1020,660,1045,640,1060,630,1110,605,1110,585,1095,565,1095,540,1100,548,1075,562,1060,550,1020,535,1015,522,965,495,935,450,918,460,890,480,870,480,850,495,825,465,798,440,800,415,790,400,810,405,835,422,880,415,910,380,950,330,1010,312,1025,318,1060,337,1105,320,1135,290,1125,285,1150,295,1175,318,1215,340,1228,308,1228,295,1190,275,1160,275,1130,295,1118,300,1080,285,1045,260,1035,232,988,262,985,290,1005,295,990,330,960,365,890,390,880,395,860,380,795,350,775,320,772,310,740,285,715,265,665,215,645,198,625,205,610,185,570,210,540,212,480,205,415,210,405,195,385,140,400,105,430,92,445,108,455,105,490,75,505,72,522,45,535,35,568,0,578];
const SW = [1525,1088,1485,1110,1510,1125,1530,1150,1545,1165,1530,1190,1505,1215,1450,1222,1440,1240,1450,1265,1435,1285,1415,1293,1360,1293,1340,1310,1335,1345,1290,1340,1255,1350,1225,1342,1215,1325,1180,1315,1130,1312,1115,1302,1098,1305,1095,1320,1055,1325,1045,1335,1020,1335,990,1360,950,1355,920,1348,900,1370,860,1372,850,1388,825,1378,780,1390,755,1365,730,1340,712,1315,715,1298,690,1285,658,1248,630,1262,615,1255,630,1235,632,1207,590,1200,560,1195,555,1180,570,1165,565,1145,585,1120,605,1110,605,1095,575,1075,545,1050,545,1038,568,1030,570,1020,520,1010,470,1008,420,1012,385,1015,360,1010,340,1022,335,1030,275,1052,250,1050,240,1035,210,1038,185,1060,165,1080,175,1105,205,1105,218,1115,205,1135,165,1145,130,1160,120,1175,85,1190,55,1185,30,1183,3,1190];

const SWISS =
  toD([...rough(ptA(NW)), ...rough(ptB(NE)), ...rough(ptC(SE)), ...rough(ptA(SW))]) +
  toD(ptB([335,185,345,180,358,190,370,205,350,203,342,212,330,195])) +
  toD(ptB([598,185,640,205,620,208,600,200])) +
  toD(ptC([580,948,584,926,588,948]));

const DOTS_A = [1133,201,803,308,792,317,821,353,935,304,1154,263,1143,275,1110,283,1100,297,1389,272,1433,257,1538,335,1179,466,1227,461,1238,459,1246,457,1184,486,1181,497,963,488,970,488,1127,509,1417,476,1424,479,1430,475,1511,477,824,538,876,527,916,527,795,562,797,580,692,591,716,598,732,595,738,589,1096,565,1083,573,967,596,627,620,792,625,792,632,851,636,810,645,689,648,684,663,798,658,790,665,778,668,767,672,745,676,973,654,1006,659,1060,641,843,702,486,712,498,715,589,724,614,717,651,721,651,728,378,766,451,762,611,782,1162,802,407,816,402,818,291,843,755,856,740,859,381,892,772,915,421,930,432,937,449,930,467,940,270,966,597,971,803,964,1218,1003,1329,1081,178,1067,670,1103,146,1103,1003,1103,129,1124,940,1122,1005,1119,1019,1119,958,1130,965,1133,94,1142,111,1144,922,1153,997,1150,1068,1205,811,1236,857,1234,1051,1274,1243,1275];
const DOTS_B = [593,59,638,84,356,138,319,177,568,210,481,243,289,266,353,267,440,291,78,326,254,362,473,360,500,345,524,345,335,395,340,395,403,413,651,393,873,392,870,407,895,440,128,513,135,518,289,521,416,531,697,527,411,564,946,558,124,575,188,587,195,606,252,575,257,582,259,589,246,606,321,572,324,576,326,599,338,612,99,668,176,662,319,670,338,668,308,681,351,695,365,702,186,705,200,714,427,722,521,717,538,722,529,730,343,738,445,742,449,738,499,735,197,755,243,765,243,772,243,778,216,782,72,792,173,797,189,797,200,795,223,800,235,800,407,762,819,759,751,810,808,810,202,842,83,1025,108,1025,986,1056,875,1125,481,1146,153,1185,353,1242,1470,1062,1473,1128,1550,1152,1184,1226,1405,1224,878,1284,892,1314,902,1338,967,1374,775,1413,1022,1448,1248,1440,1073,1478];
const DOTS_C = [1051,338,824,323,235,410,261,497,697,608,759,452,613,683];
const DOTS = [...ptA(DOTS_A), ...ptB(DOTS_B), ...ptC(DOTS_C)];

const SwissMap = () => (
  <svg width="1146" height="991" viewBox="302 174 1146 991" className="block">
    <path d={SWISS} fill="#7c8a8d" stroke="#26292a" strokeWidth=".8" fillRule="evenodd" />
    {DOTS.map(([x, y], i) => (
      <circle key={i} cx={x} cy={y} r="4.4" fill="#95532c" stroke="#33312f" strokeWidth=".9" />
    ))}
  </svg>
);

const Spin = ({ v, w }: { v: string; w: number }) => (
  <div className="ml-[4px] flex h-[25px] shrink-0 items-center justify-between rounded-[3px] border border-[#bdbdbd] bg-white pl-[5px]" style={{ width: w }}>
    <span>{v}</span>
    <div className="flex h-full w-[12px] flex-col items-center justify-center gap-[4px] border-l border-[#ddd]">
      <div className="h-0 w-0 border-x-[3px] border-b-[4px] border-x-transparent border-b-[#666]" />
      <div className="h-0 w-0 border-x-[3px] border-t-[4px] border-x-transparent border-t-[#666]" />
    </div>
  </div>
);

const StatusBar = () => (
  <div className="flex h-[34px] shrink-0 items-center text-[12px] whitespace-nowrap text-[#222]">
    <div className="ml-[5px] flex h-[26px] w-[316px] shrink-0 items-center rounded-[3px] border border-[#bdbdbd] bg-white pl-[8px] text-[14px] text-[#8b8b8b]">
      <svg width="14" height="14" viewBox="0 0 14 14" className="mr-[6px]">
        <circle cx="5.5" cy="5.5" r="4.5" fill="none" stroke="#888" strokeWidth="1.2" />
        <path d="M9 9l4 4" stroke="#888" strokeWidth="1.4" />
      </svg>
      Zu suchender Typ (Strg+K)
    </div>
    <span className="ml-[629px] w-[60px] shrink-0 text-[11.5px]">Koordinate</span>
    <div className="ml-[3px] flex h-[24px] w-[113px] shrink-0 items-center justify-center rounded-[3px] border border-[#bdbdbd] bg-white">2618677,1330759</div>
    <div className="ml-[6px] w-[16px] shrink-0">
      <Sv s={17}>
        <path d="M7 2l10 18M17 4L7 19" stroke="#333" strokeWidth="2" />
        <circle cx="12" cy="13" r="4" fill="#fff" stroke="#333" strokeWidth="1.5" />
        <path d="M3 3l4 3M17 17l3 3" stroke="#777" strokeWidth="1.5" />
      </Sv>
    </div>
    <span className="ml-[11px] w-[46px] shrink-0 text-[11.5px]">Maßstab</span>
    <div className="ml-[4px] flex h-[25px] w-[101px] shrink-0 items-center justify-between rounded-[3px] border border-[#bdbdbd] bg-white pl-[3px]">
      <span>1:1101778</span>
      <div className="flex h-full w-[19px] items-center justify-center border-l border-[#ddd]">
        <Caret c="border-t-[#777]" />
      </div>
    </div>
    <div className="ml-[11px] w-[14px] shrink-0">
      <Sv s={14}>
        <rect x="4" y="11" width="16" height="12" rx="2" fill="#777" />
        <path d="M7 11V7a5 5 0 0 1 10 0v4" fill="none" stroke="#888" strokeWidth="2.5" />
      </Sv>
    </div>
    <span className="ml-[8px] w-[74px] shrink-0 text-[11.2px]">Vergrößerung</span>
    <Spin v="100%" w={95} />
    <span className="ml-[10px] w-[46px] shrink-0">Drehung</span>
    <div className="ml-[5px]">
      <Spin v="0,0 °" w={95} />
    </div>
    <div className="ml-[7px]">
      <Check />
    </div>
    <span className="ml-[3px] w-[50px] shrink-0">Zeichnen</span>
    <div className="ml-[18px] shrink-0">
      <Globe s={14} c="#8a8a8a" d="#666" />
    </div>
    <span className="ml-[2px] w-[59px] shrink-0">EPSG:2056</span>
    <div className="ml-[23px] shrink-0">
      <Sv s={18}>
        <path d="M12 2c6 0 10 4 10 9s-4 9-10 9l-2 3-1-3c-4-1-7-5-7-9 0-5 4-9 10-9z" fill="#4b4b4b" />
        <circle cx="8" cy="11" r="1.3" fill="#fff" />
        <circle cx="12" cy="11" r="1.3" fill="#fff" />
        <circle cx="16" cy="11" r="1.3" fill="#fff" />
      </Sv>
    </div>
    <div className="ml-[10px] shrink-0">
      <Sv s={22}>
        <path d="M3 9l8-2 2 3 4 1-1 5 2 3-4 5H8l-1-5-3-1z" fill="#8c8c8c" stroke="#555" />
        <path d="M18 1l1.3 3 3 .5-2.300 2 .7 3-2.700-1.500-2.700 1.500.7-3-2.300-2 3-.5z" fill="#fff" stroke="#777" />
      </Sv>
    </div>
  </div>
);

export default function App() {
  return (
    <div className="flex h-[1200px] w-[1920px] flex-col overflow-hidden bg-[#eeeeee] font-['Noto_Sans',sans-serif] text-[14px] text-[#1c1c1c]">
      {/* Title bar */}
      <div className="relative flex h-[32px] shrink-0 items-center justify-center bg-[#383838] text-[14.5px] font-medium text-[#d8d8d8]">
        *Unbenanntes Projekt — QGIS
        <svg width="10" height="10" viewBox="0 0 10 10" className="absolute right-[10px] top-[11px]">
          <path d="M1 1l8 8M9 1L1 9" stroke="#bdbdbd" strokeWidth="2" />
        </svg>
      </div>

      {/* Menu */}
      <div className="flex h-[24px] shrink-0 items-center gap-[15.5px] border-b border-[#d5d5d5] pl-[11px] text-[#111]">
        {MENU.map(([a, b, c]) => (
          <span key={a + b + c}>
            {a}
            <u className="underline-offset-2">{b}</u>
            {c}
          </span>
        ))}
      </div>

      {/* Toolbars */}
      <Toolbar>
        <Grip w={11} />
        {["new", "open", "save", "layoutNew", "layoutMgr", "style"].map((i) => (
          <Btn key={i} i={i} />
        ))}
        <Grip w={16} />
        <Btn i="hand" on />
        {["pan", "zoomIn", "zoomOut", "zoomFull", "zoomSel", "zoomLayer", "zoom11", "zoomLast", "zoomNext", "mapView", "bmNew", "bm", "clock", "refresh"].map((i) => (
          <Btn key={i} i={i} />
        ))}
        <Grip w={16} />
        {["identify", "table", "abacus"].map((i) => (
          <Btn key={i} i={i} />
        ))}
        <Btn i="gear" on />
        <Btn i="sigma" />
        <Btn i="ruler" caret w={46} />
        <Btn i="bubble" />
        <Btn i="action" caret w={46} />
        <Btn i="textAnn" caret w={46} />
      </Toolbar>
      <Toolbar>
        <Grip w={11} />
        {["addLayer", "gpkg", "shp", "feather", "tmp"].map((i) => (
          <Btn key={i} i={i} />
        ))}
        <Sep />
        <Btn i="vedit" />
        <Sep />
        <Grip w={17} />
        {["pen2", "pen", "saveEdit", "nodes"].map((i) => (
          <Btn key={i} i={i} off />
        ))}
        <Btn i="tools" off caret w={44} />
        {["attrEdit", "trash", "cut", "copy", "paste", "undo", "redo"].map((i) => (
          <Btn key={i} i={i} off />
        ))}
        <Grip w={15} />
        <Btn i="lblYellow" />
        <Btn i="lblChart" />
        <Sep />
        <Btn i="lblPin" />
        <Btn i="lblRed" />
        <Sep />
        {["lg1", "lg2", "lg3", "lg4", "lg5"].map((i) => (
          <Btn key={i} i={i} off />
        ))}
        <Grip w={17} />
        <Btn i="wms" />
        <Btn i="wms2" />
        <Grip w={16} />
        <Btn i="py" />
        <Grip w={16} />
        <Btn i="help" />
        <Grip w={16} />
      </Toolbar>
      <Toolbar last>
        <Grip w={11} />
        <Btn i="select" caret w={45} />
        <Btn i="selAttr" caret w={45} />
        <Btn i="deselect" caret w={45} />
        <Grip w={16} />
        <Btn i="locate" />
        <Btn i="mapPaint" />
      </Toolbar>

      {/* Docks and map */}
      <div className="flex min-h-0 flex-1">
        <aside className="flex w-[295px] shrink-0 flex-col">
          <DockTitle t="Browser" />
          <div className="flex h-[27px] shrink-0 items-center pb-[5px] pl-[3px]">
            {browserBtns.map((x, i) => (
              <div key={i} className="flex w-[25px] justify-center">
                {x}
              </div>
            ))}
          </div>
          <div className="h-[444px] shrink-0 border border-[#b9b9b9] bg-white text-[14.5px]">
            {BROWSER.map(([t, ic, arrow]) => (
              <div key={t} className="flex h-[21px] items-center whitespace-nowrap">
                <div className="flex w-[20px] justify-center">{arrow && <Tri />}</div>
                <div className="ml-[2px] flex w-[18px] justify-center">{ic}</div>
                <span className="ml-[5px]">{t}</span>
              </div>
            ))}
          </div>
          <div className="flex h-[6px] shrink-0 items-center justify-center">
            <div className="h-px w-[16px] border-t border-dotted border-[#aaa]" />
          </div>
          <DockTitle t="Layer" />
          <div className="flex h-[28px] shrink-0 items-center pb-[5px] pl-[3px]">
            {layerBtns.map(([x, w], k) => (
              <div key={k} className={`flex shrink-0 ${w === 25 ? "justify-center" : "justify-start pl-[4px]"}`} style={{ width: w }}>
                {x}
              </div>
            ))}
          </div>
          <div className="flex min-h-0 flex-1 flex-col border border-[#b9b9b9] bg-white">
            <div className="min-h-0 flex-1 overflow-hidden text-[13.75px] font-bold">
              <div className="flex h-[21px] items-center whitespace-nowrap bg-[#308cc6] text-white italic">
                <div className="ml-[23px] h-[14px] w-[14px] border border-[#aaa] bg-white" />
                <div className="ml-[6px] flex w-[16px] justify-center">
                  <div className="h-[7px] w-[7px] rounded-full border border-[#555] bg-[#566a7a]" />
                </div>
                <div className="ml-[2px] h-full border-l border-[#2a7ab0] pl-[3px] leading-[21px]">
                  <span className="underline underline-offset-[3px]">14c_daten</span>
                </div>
              </div>
              {LAYERS.map(([t, sym, mem]) => (
                <div key={t} className="relative flex h-[21px] items-center whitespace-nowrap">
                  <div className="ml-[23px]">
                    <Check />
                  </div>
                  <div className="ml-[6px] flex w-[16px] shrink-0 justify-center">{sym}</div>
                  <span className="ml-[6px]">{t}</span>
                  {mem && (
                    <div className="absolute right-[8px] top-[2px] flex h-[17px] w-[18px] items-center justify-center rounded-[3px] bg-[#e9e9e9]">
                      <Chip s={14} />
                    </div>
                  )}
                </div>
              ))}
            </div>
            <div className="flex h-[13px] shrink-0 items-stretch border-t border-[#c8c8c8]">
              <div className="flex w-[14px] items-center justify-center border-r border-[#ccc] bg-[#f4f4f4]">
                <div className="h-0 w-0 border-y-[4px] border-r-[4px] border-y-transparent border-r-[#555]" />
              </div>
              <div className="w-[192px] border-r border-[#ccc] bg-gradient-to-b from-[#fafafa] to-[#f0f0f0]" />
              <div className="flex-1 bg-[#e1e1e1]" />
              <div className="flex w-[14px] items-center justify-center border-l border-[#ccc] bg-[#f4f4f4]">
                <Tri />
              </div>
            </div>
          </div>
        </aside>

        <div className="ml-[6px] mt-px w-[1148px] shrink-0 border border-[#b9b9b9] bg-white">
          <SwissMap />
        </div>

        <aside className="ml-px flex min-w-0 flex-1 flex-col pl-[5px]">
          <div className="-ml-[2px] flex h-[26px] shrink-0 items-center justify-between pr-px pb-[3px] text-[14px]">
            <span className="pl-[5px]">Verarbeitungswerkzeuge</span>
            <DockBtns />
          </div>
          <div className="flex h-[28px] shrink-0 items-center pb-[5px] pl-[6px]">
            {procBtns.map((x, i) => (
              <React.Fragment key={i}>{x}</React.Fragment>
            ))}
          </div>
          <div className="mr-px flex h-[26px] shrink-0 items-center rounded-[3px] border border-[#bdbdbd] bg-white pl-[8px]">
            <svg width="14" height="14" viewBox="0 0 14 14" className="mr-[5px]">
              <circle cx="5.5" cy="5.5" r="4.5" fill="none" stroke="#888" strokeWidth="1.2" />
              <path d="M9 9l4 4" stroke="#888" strokeWidth="1.4" />
            </svg>
            <span>extract</span>
            <svg width="13" height="10" viewBox="0 0 13 10" className="ml-auto mr-[8px]">
              <path d="M4 0h9v10H4L0 5z" fill="#8a8a8a" />
              <path d="M6 2.5l4 5M10 2.5l-4 5" stroke="#eee" strokeWidth="1.2" />
            </svg>
          </div>
          <div className="mr-px flex min-h-0 flex-1 flex-col border border-[#b9b9b9] bg-white">
            {TOOLS.map((r, i) => (
              <ToolRow key={i} r={r} />
            ))}
          </div>
        </aside>
      </div>

      <StatusBar />
    </div>
  );
}
